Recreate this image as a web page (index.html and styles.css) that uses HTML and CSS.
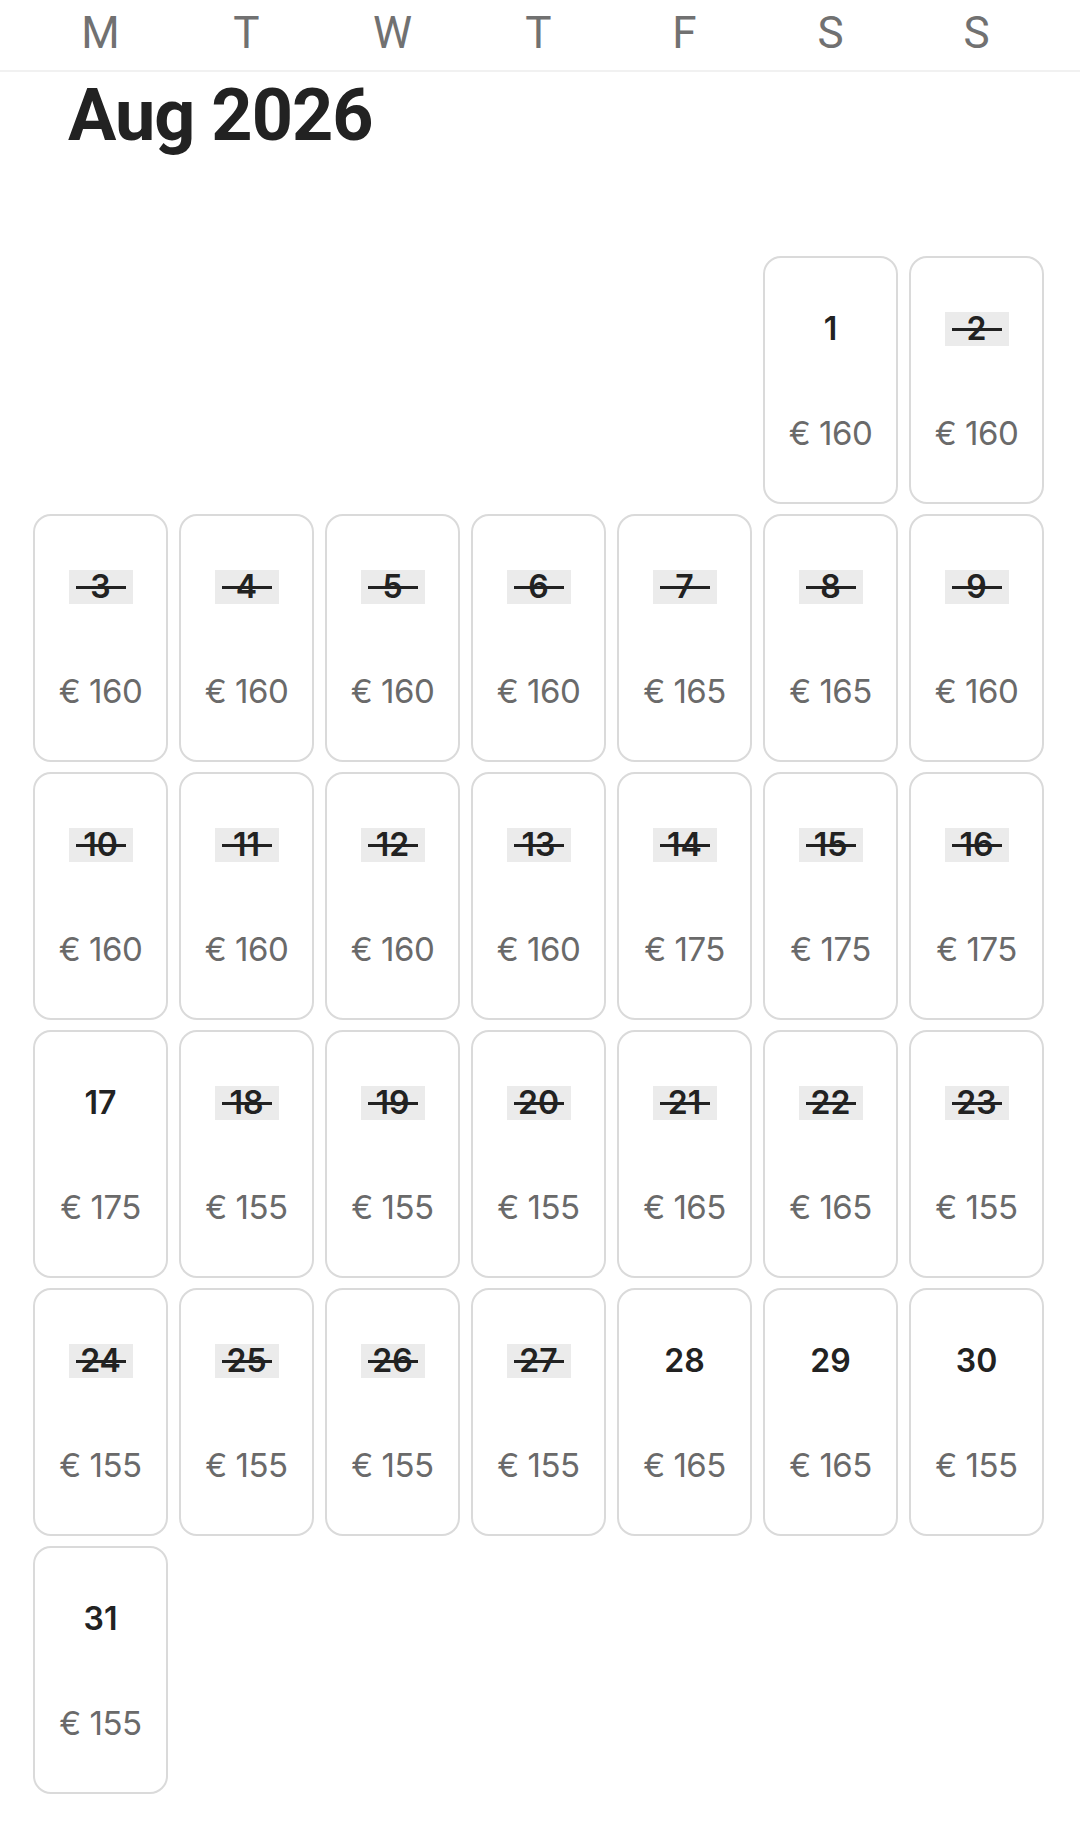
FILE: index.html
```html
<!DOCTYPE html>
<html lang="en">
<head>
<meta charset="utf-8">
<title>Aug 2026</title>
<link rel="stylesheet" href="styles.css">
</head>
<body>
<div class="weekdays">
  <span>M</span><span>T</span><span>W</span><span>T</span><span>F</span><span>S</span><span>S</span>
</div>
<h1 class="month">Aug 2026</h1>
<div class="grid">
  <div class="empty"></div><div class="empty"></div><div class="empty"></div><div class="empty"></div><div class="empty"></div>
  <div class="card"><span class="day">1</span><span class="price">€ 160</span></div>
  <div class="card"><span class="day off">2</span><span class="price">€ 160</span></div>

  <div class="card"><span class="day off">3</span><span class="price">€ 160</span></div>
  <div class="card"><span class="day off">4</span><span class="price">€ 160</span></div>
  <div class="card"><span class="day off">5</span><span class="price">€ 160</span></div>
  <div class="card"><span class="day off">6</span><span class="price">€ 160</span></div>
  <div class="card"><span class="day off">7</span><span class="price">€ 165</span></div>
  <div class="card"><span class="day off">8</span><span class="price">€ 165</span></div>
  <div class="card"><span class="day off">9</span><span class="price">€ 160</span></div>

  <div class="card"><span class="day off">10</span><span class="price">€ 160</span></div>
  <div class="card"><span class="day off">11</span><span class="price">€ 160</span></div>
  <div class="card"><span class="day off">12</span><span class="price">€ 160</span></div>
  <div class="card"><span class="day off">13</span><span class="price">€ 160</span></div>
  <div class="card"><span class="day off">14</span><span class="price">€ 175</span></div>
  <div class="card"><span class="day off">15</span><span class="price">€ 175</span></div>
  <div class="card"><span class="day off">16</span><span class="price">€ 175</span></div>

  <div class="card"><span class="day">17</span><span class="price">€ 175</span></div>
  <div class="card"><span class="day off">18</span><span class="price">€ 155</span></div>
  <div class="card"><span class="day off">19</span><span class="price">€ 155</span></div>
  <div class="card"><span class="day off">20</span><span class="price">€ 155</span></div>
  <div class="card"><span class="day off">21</span><span class="price">€ 165</span></div>
  <div class="card"><span class="day off">22</span><span class="price">€ 165</span></div>
  <div class="card"><span class="day off">23</span><span class="price">€ 155</span></div>

  <div class="card"><span class="day off">24</span><span class="price">€ 155</span></div>
  <div class="card"><span class="day off">25</span><span class="price">€ 155</span></div>
  <div class="card"><span class="day off">26</span><span class="price">€ 155</span></div>
  <div class="card"><span class="day off">27</span><span class="price">€ 155</span></div>
  <div class="card"><span class="day">28</span><span class="price">€ 165</span></div>
  <div class="card"><span class="day">29</span><span class="price">€ 165</span></div>
  <div class="card"><span class="day">30</span><span class="price">€ 155</span></div>

  <div class="card"><span class="day">31</span><span class="price">€ 155</span></div>
</div>
</body>
</html>
```

FILE: styles.css
```css
html, body {
  margin: 0;
  padding: 0;
  background: #ffffff;
}

body {
  font-family: "Inter", "Roboto", "Liberation Sans", sans-serif;
  color: #222222;
}

.weekdays {
  display: grid;
  grid-template-columns: repeat(7, 135px);
  column-gap: 11px;
  padding: 11px 0 15px 33px;
  border-bottom: 2px solid #f1f1f1;
  font-family: "Roboto", "Liberation Sans", sans-serif;
  font-size: 44px;
  line-height: 44px;
  color: #717171;
}

.weekdays span {
  text-align: center;
}

.month {
  margin: 8px 0 0 0;
  padding-left: 68px;
  font-family: "Roboto", "Inter", sans-serif;
  font-size: 72px;
  line-height: 72px;
  font-weight: 700;
  letter-spacing: -1px;
  color: #222222;
}

.grid {
  display: grid;
  grid-template-columns: repeat(7, 135px);
  grid-auto-rows: 248px;
  column-gap: 11px;
  row-gap: 10px;
  padding-left: 33px;
  margin-top: 104px;
  padding-bottom: 43px;
}

.card {
  box-sizing: border-box;
  border: 2px solid #dadada;
  border-radius: 18px;
  display: flex;
  flex-direction: column;
  align-items: center;
  padding-top: 54px;
}

.day {
  position: relative;
  height: 34px;
  line-height: 34px;
  font-size: 32px;
  font-weight: 600;
  color: #222222;
}

.day.off {
  background: #ebebeb;
  padding: 0 8px;
  min-width: 48px;
  text-align: center;
}

.day.off::after {
  content: "";
  position: absolute;
  left: 50%;
  top: 16px;
  width: 50px;
  margin-left: -25px;
  height: 3px;
  background: #222222;
}

.price {
  margin-top: 67px;
  height: 40px;
  line-height: 40px;
  font-size: 33px;
  font-weight: 400;
  color: #6a6a6a;
  letter-spacing: -0.5px;
}
```
